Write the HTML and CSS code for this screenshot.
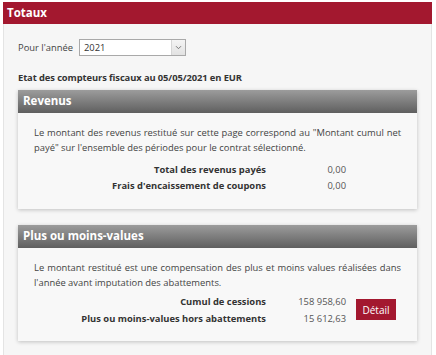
FILE: index.html
```html
<!DOCTYPE html>
<html lang="fr">
<head>
<meta charset="utf-8">
<link rel="stylesheet" href="styles.css">
</head>
<body>
<div class="frame">
  <div class="title">Totaux</div>
  <div class="content">
    <div class="year-row">
      <label class="year-label">Pour l'année</label>
      <div class="select">
        <span class="select-value">2021</span>
        <span class="select-btn"><svg width="7" height="5" viewBox="0 0 7 5"><path d="M1 1.2 L3.5 3.7 L6 1.2" fill="none" stroke="#777" stroke-width="1"/></svg></span>
      </div>
    </div>
    <div class="state">Etat des compteurs fiscaux au 05/05/2021 en EUR</div>

    <div class="panel">
      <div class="panel-head">Revenus</div>
      <div class="panel-body">
        <p class="desc">Le montant des revenus restitué sur cette page correspond au "Montant cumul net payé" sur l'ensemble des périodes pour le contrat sélectionné.</p>
        <div class="rows">
          <div class="row"><span class="lbl">Total des revenus payés</span><span class="val">0,00</span></div>
          <div class="row"><span class="lbl">Frais d'encaissement de coupons</span><span class="val">0,00</span></div>
        </div>
      </div>
    </div>

    <div class="panel">
      <div class="panel-head">Plus ou moins-values</div>
      <div class="panel-body pv">
        <p class="desc">Le montant restitué est une compensation des plus et moins values réalisées dans l'année avant imputation des abattements.</p>
        <div class="rows-btn">
          <div class="rows">
            <div class="row"><span class="lbl">Cumul de cessions</span><span class="val">158 958,60</span></div>
            <div class="row"><span class="lbl">Plus ou moins-values hors abattements</span><span class="val">15 612,63</span></div>
          </div>
          <button class="btn">Détail</button>
        </div>
      </div>
    </div>
  </div>
</div>
</body>
</html>
```
FILE: styles.css
```css
* { box-sizing: border-box; }
html, body { margin: 0; padding: 0; background: #fff; }
body {
  font-family: "Open Sans", "DejaVu Sans", sans-serif;
  font-size: 9.4px;
  color: #333;
}
.frame {
  margin: 2px 4px 0 3px;
  background: #f6f6f6;
  border-left: 1px solid #e4e4e4;
  border-right: 1px solid #e4e4e4;
  height: 353px;
}
.title {
  background: #a3182f;
  color: #fff;
  font-weight: 700;
  font-size: 11.5px;
  height: 22px;
  line-height: 21px;
  padding-left: 4px;
  margin: 0 -1px;
}
.content {
  padding: 0 13px;
}
.year-row {
  display: flex;
  align-items: center;
  padding-top: 15px;
  padding-left: 1px;
}
.year-label {
  color: #444;
  width: 61px;
  white-space: nowrap;
}
.select {
  display: flex;
  width: 107px;
  height: 17px;
  border: 1px solid #a9a9a9;
  background: #fff;
}
.select-value {
  flex: 1;
  line-height: 15px;
  padding-left: 4px;
  color: #333;
}
.select-btn {
  width: 14px;
  border-left: 1px solid #d6d6d6;
  background: linear-gradient(#f4f4f4, #e2e2e2);
  display: flex;
  align-items: center;
  justify-content: center;
}
.state {
  font-weight: 700;
  color: #333;
  margin-top: 15px;
  padding-left: 1px;
  line-height: 13px;
  letter-spacing: -0.1px;
}
.panel {
  margin-top: 6px;
  background: #f8f8f8;
  box-shadow: 0 1px 4px rgba(0,0,0,0.22);
  margin-left: 1px;
  margin-right: 1px;
}
.panel + .panel { margin-top: 16px; }
.panel-head {
  height: 23px;
  line-height: 22px;
  background: linear-gradient(#9c9c9c, #5f5f5f);
  color: #fff;
  font-weight: 700;
  font-size: 11.5px;
  padding-left: 5px;
}
.panel-body {
  padding: 12px 16px 16px 16px;
}
.desc {
  margin: 0;
  line-height: 15px;
  text-align: justify;
  color: #444;
}
.rows {
  display: flex;
  flex-direction: column;
  gap: 1px;
  margin-top: 7px;
}
.row {
  display: flex;
  line-height: 15px;
}
.lbl {
  width: 232px;
  text-align: right;
  font-weight: 700;
  color: #333;
}
.val {
  width: 80px;
  text-align: right;
  color: #555;
}
.rows-btn {
  display: flex;
  align-items: center;
}
.pv .rows { margin-top: 4px; gap: 2px; }
.pv { padding-top: 12px; padding-bottom: 15px; }
.btn {
  margin-left: 10px;
  margin-top: 3px;
  background: #a3182f;
  color: #fff;
  border: none;
  font-family: inherit;
  font-size: 10px;
  width: 40px;
  height: 21px;
  padding: 0;
}
```
